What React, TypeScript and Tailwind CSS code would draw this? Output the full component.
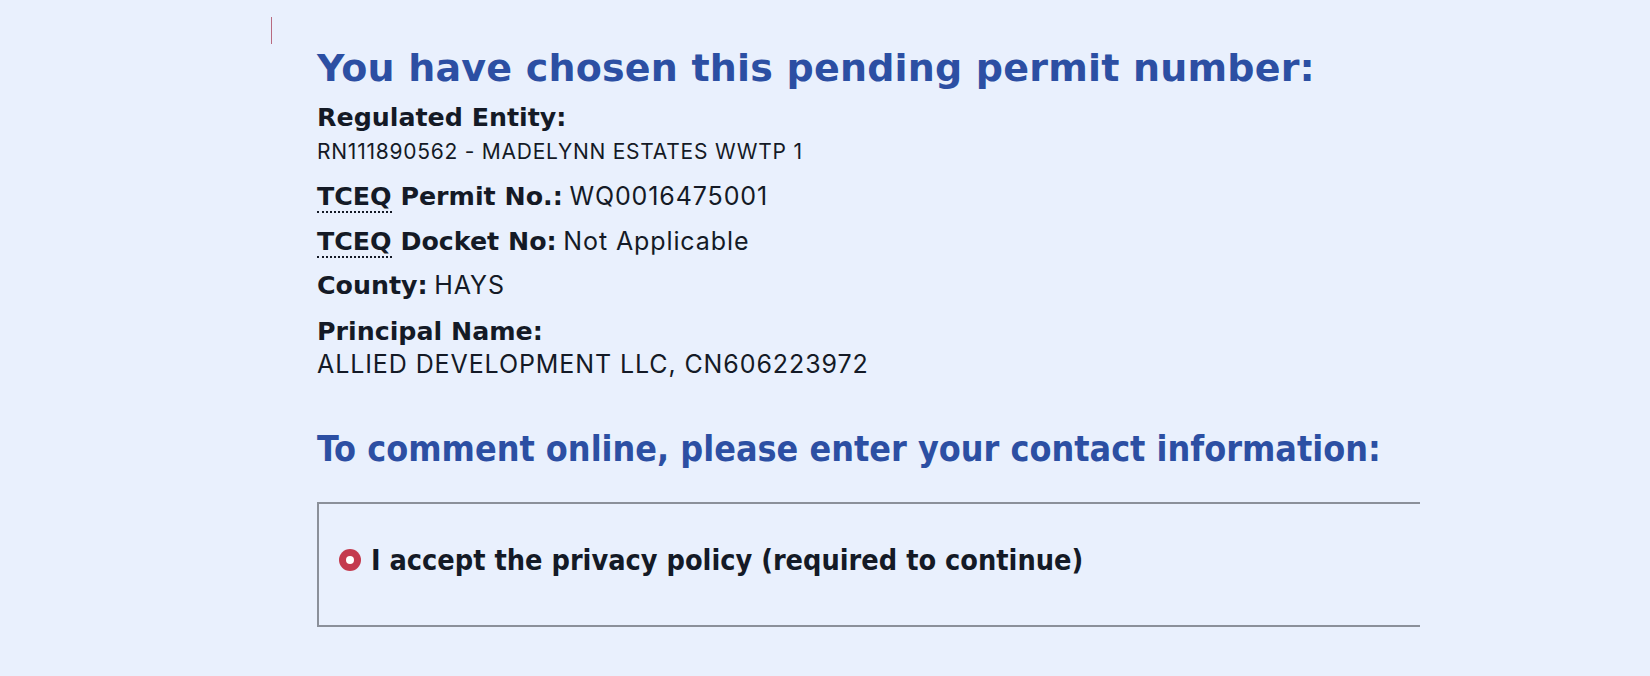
export default function App() {
  const verdana = "font-['DejaVu_Sans',sans-serif]";
  const tahoma = "font-['DejaVu_Sans_Condensed','DejaVu_Sans',sans-serif]";
  const body = "font-['Inter',sans-serif] text-[25px] tracking-[0.9px] font-normal";
  const abbr = "no-underline border-b-2 border-dotted border-[#141a26]";
  return (
    <div className="min-h-[676px] w-full bg-[#e9f0fd] text-[#141a26]">
      <div className="flex flex-col">
        <div className="ml-[271px] mt-[17px] h-[27px] w-px bg-[#b86a80]" />
        <div className="flex flex-col pl-[317px]">
          <h1 className={`${verdana} mt-[1px] text-[38px] tracking-[0.2px] leading-[46px] font-bold text-[#2c4fa3]`}>
            You have chosen this pending permit number:
          </h1>
          <div className={`${verdana} mt-[12px] text-[25.3px] leading-[30px] font-bold`}>Regulated Entity:</div>
          <div className="font-['Inter',sans-serif] mt-[6px] h-[26px] text-[21px] tracking-[0.75px] leading-[26px]">
            RN111890562 - MADELYNN ESTATES WWTP 1
          </div>
          <div className="mt-[14px] h-[32px] text-[25.3px] leading-[32px]">
            <span className={`${verdana} font-bold`}>
              <abbr className={abbr} title="Texas Commission on Environmental Quality">TCEQ</abbr> Permit No.:
            </span>{" "}
            <span className={body}>WQ0016475001</span>
          </div>
          <div className="mt-[13px] h-[32px] text-[25.3px] leading-[32px]">
            <span className={`${verdana} font-bold`}>
              <abbr className={abbr} title="Texas Commission on Environmental Quality">TCEQ</abbr> Docket No:
            </span>{" "}
            <span className={body}>Not Applicable</span>
          </div>
          <div className="mt-[12px] h-[32px] text-[25.3px] leading-[32px]">
            <span className={`${verdana} font-bold`}>County:</span> <span className={body}>HAYS</span>
          </div>
          <div className={`${verdana} mt-[16px] h-[32px] text-[25.3px] leading-[32px] font-bold`}>Principal Name:</div>
          <div className={`${body} mt-0 h-[32px] leading-[32px]`}>ALLIED DEVELOPMENT LLC, CN606223972</div>
          <h2 className={`${tahoma} mt-[47px] text-[35.6px] leading-[44px] font-bold text-[#2c4fa3]`}>
            To comment online, please enter your contact information:
          </h2>
          <div className="mt-[31px] h-[125px] w-[1103px] border-2 border-r-0 border-[#8b909a] flex items-start pt-[41px] pl-[20px]">
            <label className="flex items-center gap-[10px]">
              <span className="w-[22px] h-[22px] rounded-full bg-[#c43a4e] flex items-center justify-center">
                <span className="w-[8px] h-[8px] rounded-full bg-white" />
              </span>
              <span className={`${tahoma} text-[28.6px] leading-[30px] font-bold`}>
                I accept the privacy policy (required to continue)
              </span>
            </label>
          </div>
        </div>
      </div>
    </div>
  );
}
